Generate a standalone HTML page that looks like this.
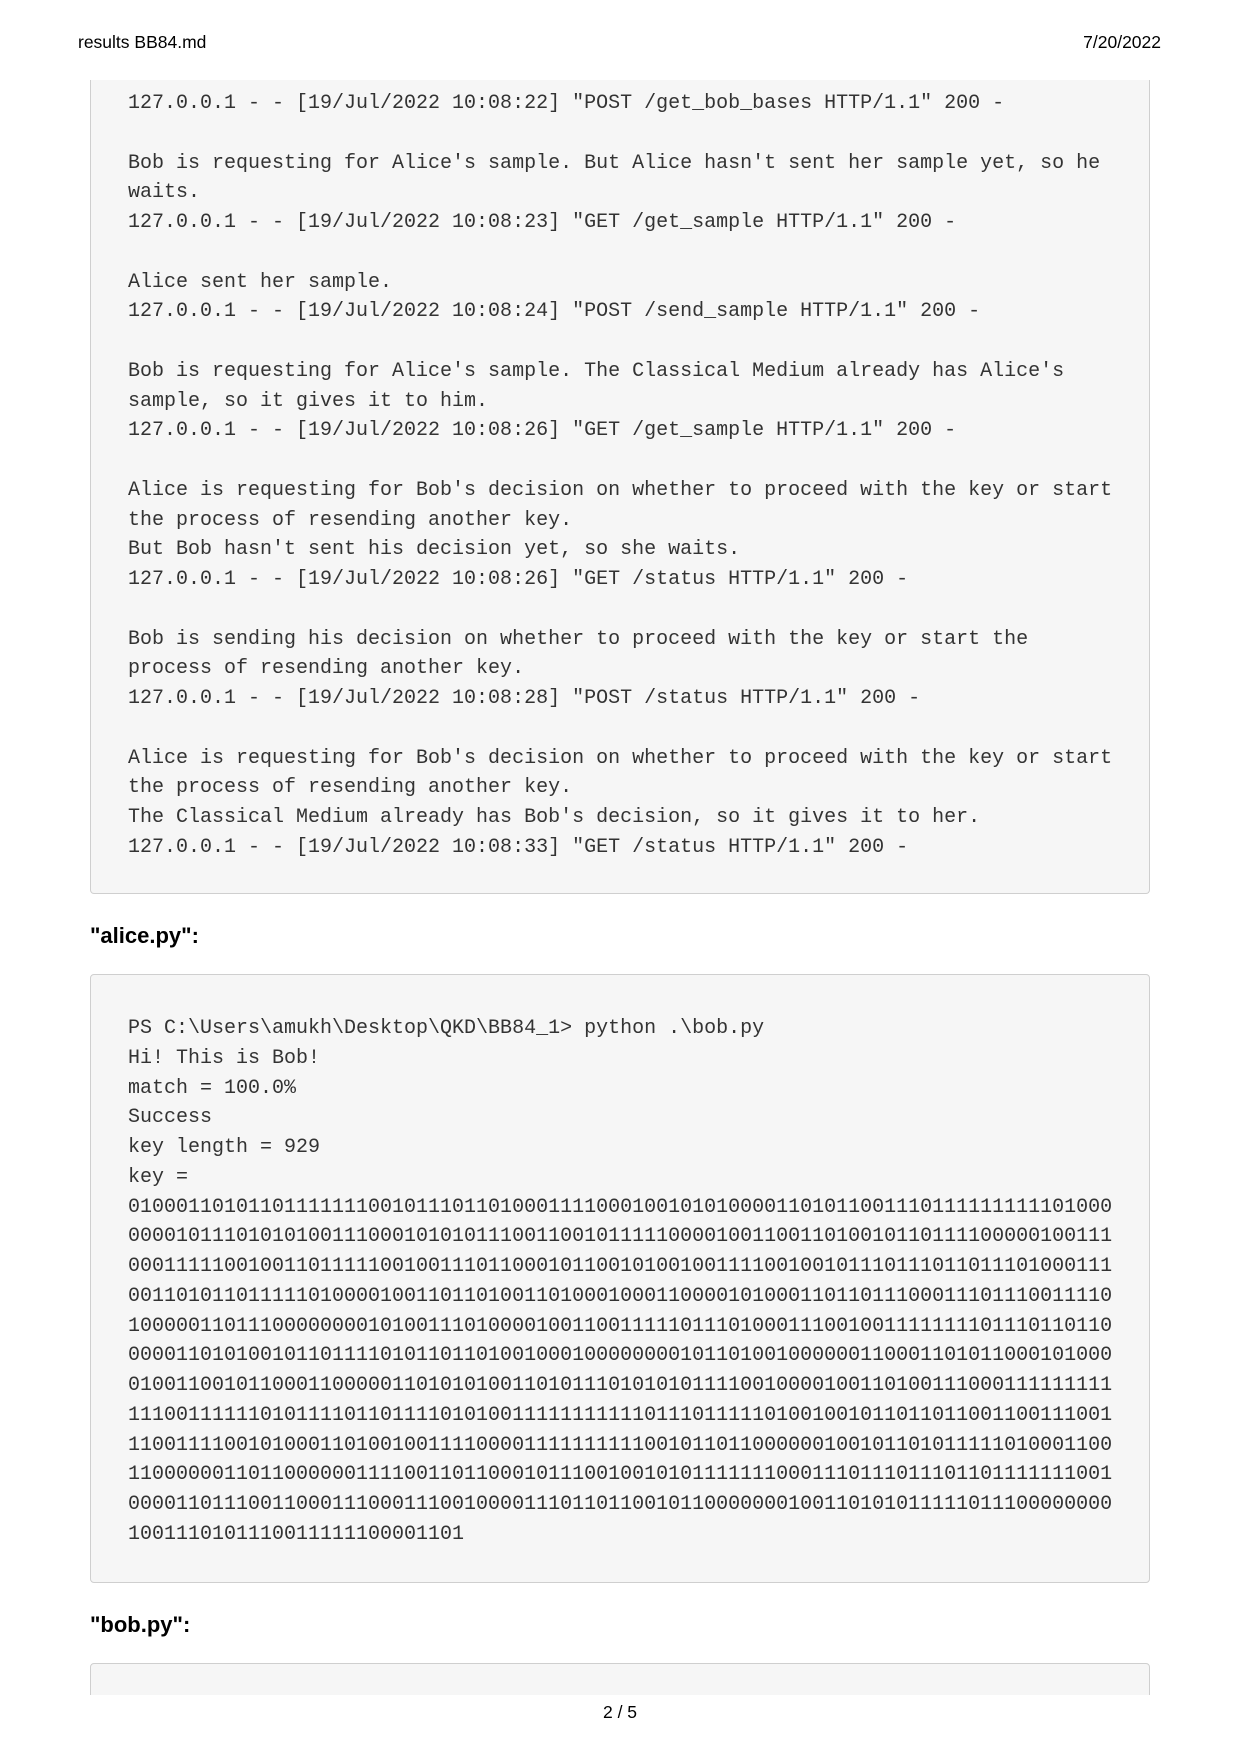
<!DOCTYPE html>
<html><head><meta charset="utf-8"><style>
body{margin:0;width:1240px;height:1754px;overflow:hidden;background:#fff;position:relative;font-family:"Liberation Sans",Arial,sans-serif;}
.hd{position:absolute;top:32px;font-size:17.5px;color:#000;}
.box{position:absolute;left:90px;width:1060px;background:#f6f6f6;border:1px solid #cfcfcf;border-radius:4px;box-sizing:border-box;}
pre{margin:0;position:absolute;left:37px;font-family:"Liberation Mono",monospace;font-size:20px;line-height:29.75px;color:#333;white-space:pre;}
h3{position:absolute;left:90px;margin:0;font-size:22px;font-weight:bold;color:#000;line-height:24px;}
</style></head><body>
<div class="hd" style="left:78px">results BB84.md</div>
<div class="hd" style="right:79px">7/20/2022</div>

<div class="box" style="top:80px;height:814px;border-top:none;border-radius:0 0 4px 4px;">
<pre style="top:9px">127.0.0.1 - - [19/Jul/2022 10:08:22] "POST /get_bob_bases HTTP/1.1" 200 -

Bob is requesting for Alice's sample. But Alice hasn't sent her sample yet, so he
waits.
127.0.0.1 - - [19/Jul/2022 10:08:23] "GET /get_sample HTTP/1.1" 200 -

Alice sent her sample.
127.0.0.1 - - [19/Jul/2022 10:08:24] "POST /send_sample HTTP/1.1" 200 -

Bob is requesting for Alice's sample. The Classical Medium already has Alice's
sample, so it gives it to him.
127.0.0.1 - - [19/Jul/2022 10:08:26] "GET /get_sample HTTP/1.1" 200 -

Alice is requesting for Bob's decision on whether to proceed with the key or start
the process of resending another key.
But Bob hasn't sent his decision yet, so she waits.
127.0.0.1 - - [19/Jul/2022 10:08:26] "GET /status HTTP/1.1" 200 -

Bob is sending his decision on whether to proceed with the key or start the
process of resending another key.
127.0.0.1 - - [19/Jul/2022 10:08:28] "POST /status HTTP/1.1" 200 -

Alice is requesting for Bob's decision on whether to proceed with the key or start
the process of resending another key.
The Classical Medium already has Bob's decision, so it gives it to her.
127.0.0.1 - - [19/Jul/2022 10:08:33] "GET /status HTTP/1.1" 200 -</pre>
</div>

<h3 style="top:924px">"alice.py":</h3>

<div class="box" style="top:974px;height:609px;">
<pre style="top:39px">PS C:\Users\amukh\Desktop\QKD\BB84_1&gt; python .\bob.py
Hi! This is Bob!
match = 100.0%
Success
key length = 929
key =
0100011010110111111100101110110100011110001001010100001101011001110111111111101000
0000101110101010011100010101011100110010111110000100110011010010110111100000100111
0001111100100110111110010011101100010110010100100111100100101110111011011101000111
0011010110111110100001001101101001101000100011000010100011011011100011101110011110
1000001101110000000010100111010000100110011111011101000111001001111111101110110110
0000110101001011011110101101101001000100000000101101001000000110001101011000101000
0100110010110001100000110101010011010111010101011110010000100110100111000111111111
1110011111101011110110111101010011111111111011101111101001001011011011001100111001
1100111100101000110100100111100001111111111001011011000000100101101011111010001100
1100000011011000000111100110110001011100100101011111110001110111011101101111111001
0000110111001100011100011100100001110110110010110000000100110101011111011100000000
1001110101110011111100001101</pre>
</div>

<h3 style="top:1613px">"bob.py":</h3>

<div class="box" style="top:1663px;height:60px;"></div>
<div style="position:absolute;left:0;top:1695px;width:1240px;height:59px;background:#fff;"></div>
<div style="position:absolute;top:1702px;left:0;width:1240px;text-align:center;font-size:17.5px;">2 / 5</div>
</body></html>
